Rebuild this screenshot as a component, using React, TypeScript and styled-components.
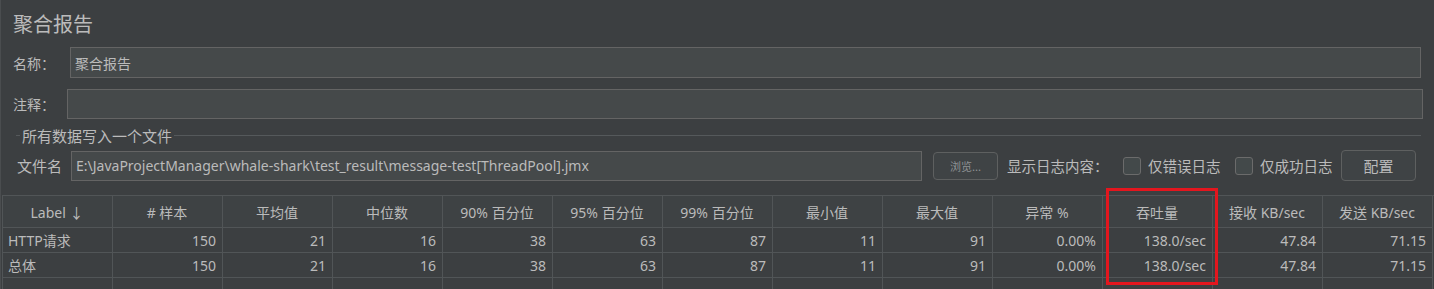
import React from 'react'
import styled, { createGlobalStyle } from 'styled-components'

const GlobalStyle = createGlobalStyle`
  html, body {
    margin: 0;
    padding: 0;
    background: #3c3f41;
  }
  body {
    font-family: 'Noto Sans', 'Noto Sans CJK SC', sans-serif;
    color: #bbbbbb;
    font-size: 14px;
  }
`

const Page = styled.div`
  width: 1434px;
  height: 289px;
  overflow: hidden;
  border-left: 1px solid #4a4d4f;
  box-sizing: border-box;
`

const Form = styled.div`
  padding: 9px 11px 0 12px;
  display: flex;
  flex-direction: column;
`

const Title = styled.div`
  font-family: 'Noto Sans CJK SC', sans-serif;
  font-size: 20px;
  line-height: 30px;
  height: 30px;
  margin-bottom: 8px;
`

const Row = styled.div<{ $gap: number; $mb: number }>`
  display: flex;
  align-items: center;
  gap: ${(p) => p.$gap}px;
  margin-bottom: ${(p) => p.$mb}px;
`

const Label = styled.span<{ $size?: number }>`
  font-family: 'Noto Sans CJK SC', sans-serif;
  font-size: ${(p) => p.$size ?? 14}px;
  white-space: nowrap;
  flex-shrink: 0;
`

const TextInput = styled.div<{ $h: number; $mr?: number }>`
  flex: 1;
  min-width: 0;
  height: ${(p) => p.$h}px;
  box-sizing: border-box;
  background: #45494a;
  border: 1px solid #646464;
  padding: 0 4px;
  display: flex;
  align-items: center;
  font-family: 'Noto Sans', 'Noto Sans CJK SC', sans-serif;
  font-size: 14px;
  color: #bbbbbb;
  margin-right: ${(p) => p.$mr ?? 0}px;
  white-space: nowrap;
  overflow: hidden;
`

const Group = styled.fieldset`
  margin: 0 2px 0 3px;
  padding: 4px 0 0 0;
  border: none;
  border-top: 1px solid #55595b;
  min-width: 0;
`

const Legend = styled.legend`
  font-family: 'Noto Sans CJK SC', sans-serif;
  font-size: 15px;
  padding: 0 2px;
  margin-left: 4px;
`

const FileRow = styled.div`
  display: flex;
  align-items: center;
  margin: 0 5px 14px 1px;
`

const Button = styled.div<{ $w: number; $h: number; $dim?: boolean }>`
  width: ${(p) => p.$w}px;
  height: ${(p) => p.$h}px;
  box-sizing: border-box;
  border: 1px solid #5e6060;
  border-radius: 4px;
  background: #3f4345;
  display: flex;
  align-items: center;
  justify-content: center;
  font-family: 'Noto Sans CJK SC', sans-serif;
  font-size: ${(p) => (p.$dim ? 11 : 15)}px;
  color: ${(p) => (p.$dim ? '#8e9294' : '#bbbbbb')};
  flex-shrink: 0;
`

const Check = styled.span`
  width: 18px;
  height: 18px;
  box-sizing: border-box;
  border: 1px solid #6b6b6b;
  border-radius: 3px;
  background: #43494a;
  margin-right: 7px;
  flex-shrink: 0;
`

const TableWrap = styled.div`
  position: relative;
  margin-left: 1px;
`

const Grid = styled.div`
  display: grid;
  grid-template-columns: repeat(13, 110px);
  border-top: 1px solid #515557;
  border-left: 1px solid #515557;
`

const Cell = styled.div<{ $head?: boolean; $align: 'left' | 'right' | 'center' }>`
  height: ${(p) => (p.$head ? 32 : 25)}px;
  box-sizing: border-box;
  border-right: 1px solid #515557;
  border-bottom: 1px solid #515557;
  background: ${(p) => (p.$head ? '#3e4244' : '#3c3f41')};
  display: flex;
  align-items: center;
  justify-content: ${(p) =>
    p.$align === 'left' ? 'flex-start' : p.$align === 'right' ? 'flex-end' : 'center'};
  padding: 0 6px 0 5px;
  font-family: 'Noto Sans', 'Noto Sans CJK SC', sans-serif;
  font-size: 14px;
  white-space: nowrap;
  overflow: hidden;
`

const Highlight = styled.div`
  position: absolute;
  left: 1104px;
  top: -7px;
  width: 112px;
  height: 97px;
  box-sizing: border-box;
  border: 3px solid #e3161e;
  pointer-events: none;
`

const headers = [
  'Label ↓',
  '# 样本',
  '平均值',
  '中位数',
  '90% 百分位',
  '95% 百分位',
  '99% 百分位',
  '最小值',
  '最大值',
  '异常 %',
  '吞吐量',
  '接收 KB/sec',
  '发送 KB/sec',
]

const rows = [
  ['HTTP请求', '150', '21', '16', '38', '63', '87', '11', '91', '0.00%', '138.0/sec', '47.84', '71.15'],
  ['总体', '150', '21', '16', '38', '63', '87', '11', '91', '0.00%', '138.0/sec', '47.84', '71.15'],
  Array(13).fill(''),
]

export default function App() {
  return (
    <>
      <GlobalStyle />
      <Page>
        <Form>
          <Title>聚合报告</Title>
          <Row $gap={15} $mb={11}>
            <Label>名称：</Label>
            <TextInput $h={31} $mr={2}>聚合报告</TextInput>
          </Row>
          <Row $gap={12} $mb={6}>
            <Label>注释：</Label>
            <TextInput $h={30} />
          </Row>
          <Group>
            <Legend>所有数据写入一个文件</Legend>
            <FileRow>
              <Label $size={15} style={{ marginRight: 9 }}>
                文件名
              </Label>
              <TextInput $h={30} $mr={11}>
                E:\JavaProjectManager\whale-shark\test_result\message-test[ThreadPool].jmx
              </TextInput>
              <Button $w={65} $h={28} $dim>
                浏览...
              </Button>
              <Label $size={14.5} style={{ marginLeft: 9, marginRight: 14.5 }}>
                显示日志内容：
              </Label>
              <Check />
              <Label $size={14.5} style={{ marginRight: 14.5 }}>
                仅错误日志
              </Label>
              <Check />
              <Label $size={14.5} style={{ marginRight: 8.5 }}>
                仅成功日志
              </Label>
              <Button $w={75} $h={31}>
                配置
              </Button>
            </FileRow>
          </Group>
        </Form>
        <TableWrap>
          <Grid>
            {headers.map((h) => (
              <Cell key={h} $head $align="center">
                {h}
              </Cell>
            ))}
            {rows.map((r, ri) =>
              r.map((v, ci) => (
                <Cell key={`${ri}-${ci}`} $align={ci === 0 ? 'left' : 'right'}>
                  {v}
                </Cell>
              )),
            )}
          </Grid>
          <Highlight />
        </TableWrap>
      </Page>
    </>
  )
}
